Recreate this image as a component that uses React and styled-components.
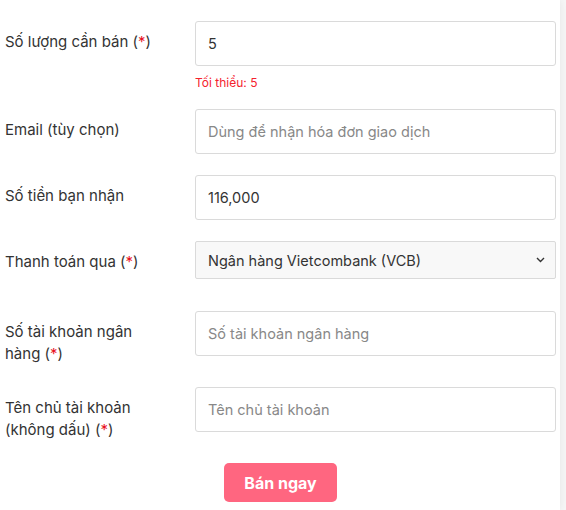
import React from 'react';
import styled, { createGlobalStyle } from 'styled-components';

const GlobalStyle = createGlobalStyle`
  * {
    box-sizing: border-box;
  }
  body {
    margin: 0;
    background: #f6f6f6;
    font-family: Inter, Roboto, "Noto Sans", sans-serif;
  }
`;

const Card = styled.form`
  width: 560px;
  min-height: 510px;
  background: #fff;
  box-shadow: 1px 0 8px rgba(0, 0, 0, 0.06);
  padding: 21px 4px 0 5px;
`;

const Row = styled.div`
  display: grid;
  grid-template-columns: 190px 1fr;
  align-items: start;
  margin-bottom: ${(p) => p.$mb || 21}px;
`;

const Label = styled.label`
  padding: 10px 24px 0 0;
  font-size: 15px;
  line-height: 22px;
  color: #333;
`;

const Star = styled.span`
  color: #e8101e;
`;

const Field = styled.div`
  display: flex;
  flex-direction: column;
`;

const Input = styled.input`
  width: 100%;
  height: 45px;
  border: 1px solid #dadada;
  border-radius: 3px;
  padding: 0 12px;
  font-family: Inter, Roboto, "Noto Sans", sans-serif;
  font-size: 14.5px;
  color: #333;
  background: #fff;
  outline: none;

  &::placeholder {
    color: #888;
  }
`;

const SelectBox = styled.div`
  position: relative;
  height: 38px;
`;

const Select = styled.select`
  width: 100%;
  height: 38px;
  appearance: none;
  border: 1px solid #dadada;
  border-radius: 2px;
  padding: 0 30px 0 12px;
  font-family: Inter, Roboto, "Noto Sans", sans-serif;
  font-size: 14.5px;
  color: #333;
  background: #f8f8f8;
  outline: none;
`;

const Chevron = styled.svg`
  position: absolute;
  right: 11px;
  top: 16px;
  pointer-events: none;
`;

const Error = styled.div`
  margin-top: 9px;
  font-size: 12px;
  line-height: 16px;
  color: #f5222d;
`;

const Actions = styled.div`
  display: flex;
  justify-content: center;
`;

const Button = styled.button`
  width: 113px;
  height: 39px;
  border: none;
  border-radius: 5px;
  background: #ff6680;
  color: #fff;
  font-family: Inter, Roboto, "Noto Sans", sans-serif;
  font-size: 16px;
  font-weight: 700;
  cursor: pointer;
`;

const Req = () => (
  <>
    (<Star>*</Star>)
  </>
);

const App = () => {
  return (
    <>
      <GlobalStyle />
      <Card onSubmit={(e) => e.preventDefault()}>
        <Row $mb={18}>
          <Label>
            Số lượng cần bán <Req />
          </Label>
          <Field>
            <Input defaultValue="5" />
            <Error>Tối thiểu: 5</Error>
          </Field>
        </Row>
        <Row>
          <Label>Email (tùy chọn)</Label>
          <Input placeholder="Dùng để nhận hóa đơn giao dịch" />
        </Row>
        <Row>
          <Label>Số tiền bạn nhận</Label>
          <Input defaultValue="116,000" readOnly />
        </Row>
        <Row $mb={32}>
          <Label>
            Thanh toán qua <Req />
          </Label>
          <SelectBox>
            <Select defaultValue="vcb">
              <option value="vcb">Ngân hàng Vietcombank (VCB)</option>
            </Select>
            <Chevron width="9" height="6" viewBox="0 0 9 6">
              <path d="M1 1l3.5 3.5L8 1" fill="none" stroke="#333" strokeWidth="1.4" />
            </Chevron>
          </SelectBox>
        </Row>
        <Row $mb={22}>
          <Label>
            Số tài khoản ngân hàng <Req />
          </Label>
          <Input placeholder="Số tài khoản ngân hàng" />
        </Row>
        <Row $mb={22}>
          <Label>
            Tên chủ tài khoản (không dấu) <Req />
          </Label>
          <Input placeholder="Tên chủ tài khoản" />
        </Row>
        <Actions>
          <Button type="submit">Bán ngay</Button>
        </Actions>
      </Card>
    </>
  );
};

export default App;
